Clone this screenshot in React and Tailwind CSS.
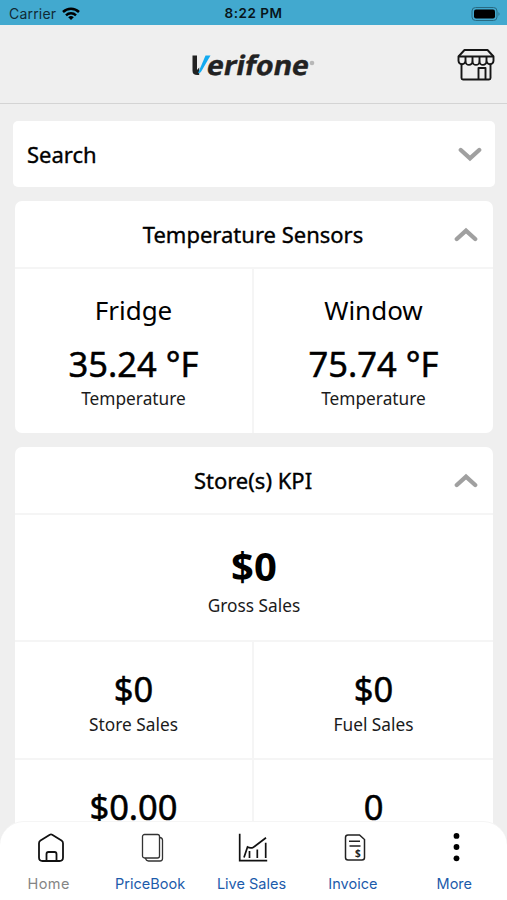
import { useState } from 'react'

const sans = "font-['Noto_Sans','Open_Sans',sans-serif]"
const ui = "font-['Inter','Liberation_Sans',sans-serif]"

function Chevron({ up = false }) {
  return (
    <svg width="24" height="15" viewBox="0 0 24 15" fill="none" aria-hidden="true">
      <path
        d={up ? 'M2.8 12L12 3.600l9.200 8.400' : 'M2.800 3L12 11.400l9.200-8.400'}
        stroke="#a0a0a0"
        strokeWidth="4.3"
        strokeLinecap="round"
      />
    </svg>
  )
}

function Logo() {
  return (
    <svg width="126" height="40" viewBox="0 0 126 40" className="overflow-visible" role="img" aria-label="Verifone">
      <path d="M1.500 5.500h4.500v14.500l2.200-2.500v7.500H6.200c-3 0-4.700-1.300-4.700-4.300z" fill="#222" />
      <path d="M14.500 5.500h5L10.500 21c-.9 1.500-2 2.200-3.500 2.200z" fill="#12aaf0" />
      <text
        x="14.500"
        y="0"
        transform="translate(0 25) skewX(-11)"
        textLength="102"
        lengthAdjust="spacingAndGlyphs"
        className="font-['Noto_Sans','Open_Sans',sans-serif] text-[27px] font-bold"
        fill="#222"
        stroke="#222"
        strokeWidth="0.4"
      >
        erifone
      </text>
      <circle cx="121" cy="13" r="2.300" fill="#b8b8b8" />
    </svg>
  )
}

function StoreIcon() {
  return (
    <svg width="38" height="32" viewBox="0 0 38 32" fill="none" stroke="#161616" strokeWidth="1.9" strokeLinejoin="round" aria-hidden="true">
      <path d="M7.5 1h23L36.500 7.500v4.500a3.600 3.600 0 0 1-3.600 3.200 3.600 3.600 0 0 1-3.400-2.800 3.500 3.500 0 0 1-7 0 3.500 3.500 0 0 1-7 0 3.500 3.500 0 0 1-7 0 3.600 3.600 0 0 1-3.400 2.800A3.600 3.600 0 0 1 1.500 12V7.500z" />
      <path d="M1.500 7.500h35M8.500 7.500v5M15.500 7.500v5M22.500 7.500v5M29.500 7.500v5M4.500 15v14q0 1.500 1.500 1.500h26q1.500 0 1.500-1.500V15M21.500 30V19h7v11" />
    </svg>
  )
}

function HomeIcon() {
  return (
    <svg width="26" height="30" viewBox="0 0 26 30" fill="none" stroke="#111" strokeWidth="1.8" strokeLinejoin="round" aria-hidden="true">
      <path d="M11.800 1.800q1.200-.7 2.400 0l9.300 5.700q1.500 1 1.500 2.700v14.300q0 3.500-3.500 3.500h-17Q1 28 1 24.500V10.200q0-1.700 1.500-2.700z" />
      <path d="M8.500 28v-7q0-2 2-2h6q2 0 2 2v7" />
    </svg>
  )
}

function BookIcon() {
  return (
    <svg width="24" height="30" viewBox="0 0 24 30" fill="none" stroke="#333" strokeWidth="1.300" aria-hidden="true">
      <rect x="2.500" y="1.500" width="17" height="23.500" rx="2" />
      <path d="M19.500 4.500q3 .3 3 2.500v18.500q0 2.500-2.500 2.500H8.500q-2.500 0-3-3" />
    </svg>
  )
}

function ChartIcon() {
  return (
    <svg width="30" height="30" viewBox="0 0 30 30" fill="none" stroke="#111" strokeWidth="1.700" aria-hidden="true">
      <path d="M1.700 .7v27h27.500" />
      <path d="M6 24.500L9.500 14q3 1.800 6 .2L28 4.700" />
      <path d="M11.500 18v7M19.300 16.500V25M27.700 9.700V25" />
    </svg>
  )
}

function InvoiceIcon() {
  return (
    <svg width="22" height="30" viewBox="0 0 22 30" fill="none" stroke="#222" strokeWidth="1.500" aria-hidden="true">
      <path d="M4 2h11.500l5 4.500v18q0 2.500-2.500 2.500H4q-2.500 0-2.500-2.500v-20Q1.500 2 4 2z" />
      <path d="M5 8.300h11M5.500 13h11" />
      <text x="11" y="23.500" className="font-['Noto_Sans',sans-serif] text-[10px] font-bold" fill="#222" stroke="none">$</text>
    </svg>
  )
}

function MoreIcon() {
  return (
    <svg width="8" height="30" viewBox="0 0 8 30" aria-hidden="true">
      <circle cx="4.500" cy="2.900" r="2.900" />
      <circle cx="4.500" cy="14" r="2.900" />
      <circle cx="4.500" cy="25.300" r="2.900" />
    </svg>
  )
}

function CardHeader({ title }) {
  return (
    <div className="relative h-[66px] flex items-center justify-center">
      <h2 className="pt-px pr-[2px] text-[22px] [-webkit-text-stroke:0.35px_black]">{title}</h2>
      <span className="absolute right-[15px]"><Chevron up /></span>
    </div>
  )
}

function Label({ children }) {
  return <p className="mt-[2px] text-[17.3px] leading-[24px] text-[#1b1b1b]">{children}</p>
}

function Metric({ value, label }) {
  return (
    <div className="flex flex-col items-center h-[116px] pt-[26px]">
      <p className="text-[34.5px] leading-[42px] mb-px [-webkit-text-stroke:0.5px_black]">{value}</p>
      {label && <Label>{label}</Label>}
    </div>
  )
}

function Sensor({ name, value }) {
  return (
    <div className="flex flex-col items-center pt-[24px] h-[164px]">
      <p className="text-[26px] leading-[34px]">{name}</p>
      <p className="text-[34.5px] leading-[42px] mt-[16px] [-webkit-text-stroke:0.5px_black]">{value}</p>
      <Label>Temperature</Label>
    </div>
  )
}

const tabs = [
  { name: 'Home', icon: HomeIcon },
  { name: 'PriceBook', icon: BookIcon },
  { name: 'Live Sales', icon: ChartIcon },
  { name: 'Invoice', icon: InvoiceIcon },
  { name: 'More', icon: MoreIcon },
]

export default function App() {
  const [active, setActive] = useState('Home')

  return (
    <div className={`relative w-[507px] h-[900px] overflow-hidden bg-[#efefef] text-black ${sans}`}>

      {/* Status bar */}
      <div className={`grid grid-cols-3 items-center h-[25px] pt-[2px] bg-[#42a9cf] ${ui}`}>
        <div className="flex items-center gap-[6px] pl-[9px] text-[#102a35]">
          <span className="text-[14px] tracking-[0.2px]">Carrier</span>
          <svg width="18" height="14" viewBox="0 0 18 14" fill="none" stroke="#000" strokeWidth="2.500" aria-hidden="true">
            <path d="M1 5a11.500 11.500 0 0 1 16 0M4 8.300a7.300 7.300 0 0 1 10 0" />
            <path d="M9 13L6.200 10.200a4.200 4.200 0 0 1 5.600 0z" fill="#000" stroke="none" />
          </svg>
        </div>
        <span className="text-center text-[13.5px] tracking-[0.5px] font-semibold text-[#07151b]">8:22 PM</span>
        <div className="flex justify-end pr-[6px]">
          <svg width="30" height="14" viewBox="0 0 30 14" aria-hidden="true">
            <rect x="1" y=".5" width="25" height="13" rx="3.500" fill="none" stroke="#286a82" />
            <rect x="3" y="2.500" width="21" height="9" rx="2" />
            <path d="M27.500 5q2 2 0 4z" fill="#286a82" />
          </svg>
        </div>
      </div>

      {/* App header */}
      <header className="relative h-[79px] flex justify-center border-b border-[#d4d4d4]">
        <div className="pt-[25px]"><Logo /></div>
        <button className="absolute right-[12px] top-[24px]" aria-label="Stores"><StoreIcon /></button>
      </header>

      {/* Search */}
      <div className="flex items-center justify-between h-[66px] mt-[17px] ml-[13px] mr-[12px] pl-[14px] pr-[13px] bg-white rounded-[5px]">
        <span className="pt-px text-[22px] [-webkit-text-stroke:0.35px_black]">Search</span>
        <Chevron />
      </div>

      {/* Temperature sensors */}
      <section className="mt-[14px] ml-[15px] mr-[14px] h-[232px] bg-white rounded-[7px]">
        <CardHeader title="Temperature Sensors" />
        <div className="grid grid-cols-2 border-t-2 border-[#f5f5f5] divide-x-2 divide-[#f5f5f5]">
          <Sensor name="Fridge" value="35.24 °F" />
          <Sensor name="Window" value="75.74 °F" />
        </div>
      </section>

      {/* Store KPI */}
      <section className="mt-[14px] ml-[15px] mr-[14px] bg-white rounded-[7px]">
        <CardHeader title="Store(s) KPI" />
        <div className="flex flex-col items-center h-[127px] pt-[27px] border-t-2 border-[#f5f5f5]">
          <p className="text-[40px] leading-[48px] mb-[2px] font-bold">$0</p>
          <Label>Gross Sales</Label>
        </div>
        <div className="grid grid-cols-2 border-t-2 border-[#f5f5f5] divide-x-2 divide-[#f5f5f5]">
          <Metric value="$0" label="Store Sales" />
          <Metric value="$0" label="Fuel Sales" />
        </div>
        <div className="grid grid-cols-2 border-t-2 border-[#f5f5f5] divide-x-2 divide-[#f5f5f5]">
          <Metric value="$0.00" />
          <Metric value="0" />
        </div>
      </section>

      {/* Bottom tabs, float over the scrolled cards */}
      <nav className={`absolute inset-x-0 bottom-0 h-[79px] grid grid-cols-5 bg-white rounded-t-[24px] border-t border-[#f5f5f5] ${ui}`}>
        {tabs.map(({ name, icon: Icon }) => (
          <button key={name} onClick={() => setActive(name)} className="flex flex-col items-center pt-[11px]">
            <Icon />
            <span className={`relative right-[2px] mt-[11px] text-[14.5px] leading-[20px] whitespace-nowrap ${active === name ? 'text-[#858585] tracking-[0.5px]' : 'text-[#1c5bab]'}`}>
              {name}
            </span>
          </button>
        ))}
      </nav>
    </div>
  )
}
